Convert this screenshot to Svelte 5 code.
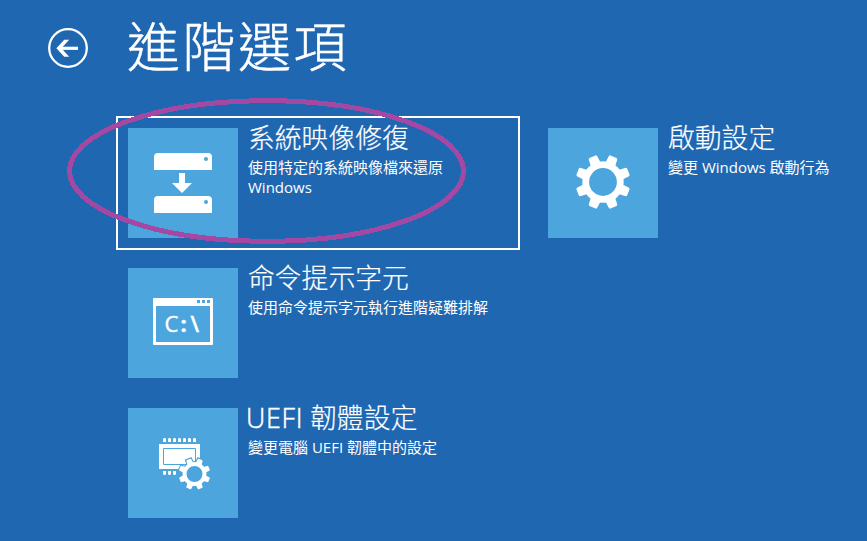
<script>
  const options = [
    { icon: 'image', title: '系統映像修復', text: '使用特定的系統映像檔來還原 Windows', selected: true },
    { icon: 'gear', title: '啟動設定', text: '變更 Windows 啟動行為' },
    { icon: 'prompt', title: '命令提示字元', text: '使用命令提示字元執行進階疑難排解' },
    { icon: 'blank' },
    { icon: 'firmware', prefix: 'UEFI', title: '韌體設定', text: '變更電腦 UEFI 韌體中的設定' }
  ];
  const teeth = [22.5, 67.5, 112.5, 157.5, 202.5, 247.5, 292.5, 337.5];
</script>

{#snippet gear()}
  <circle r="17.3" fill="none" stroke="#fff" stroke-width="6.8" />
  {#each teeth as angle}
    <path d="M-5.2-19L-4.6-25.8Q-4.4-27.4-3.2-27.4H3.2Q4.4-27.4 4.6-25.8L5.2-19Z" fill="#fff" transform="rotate({angle})" />
  {/each}
{/snippet}

<main>
  <header>
    <svg class="back" width="42" height="42" viewBox="0 0 42 42" fill="none" stroke="#fff">
      <circle cx="21" cy="21" r="18.8" stroke-width="2.3" />
      <path d="M31 21.3H13" stroke-width="3.2" />
      <path d="M17.2 12.8H22.2L14.4 21.3L22.2 29.8H17.2L9.4 21.3Z" fill="#fff" stroke="none" />
    </svg>
    <h1>進階選項</h1>
  </header>

  <div class="grid">
    {#each options as o}
      {#if o.title}
        <button class="option" class:selected={o.selected}>
          <span class="tile">
            <svg width="110" height="110" viewBox="0 0 110 110">
              {#if o.icon === 'image'}
                <g fill="#fff">
                  <path d="M26 42V29Q26 25 30 25H80Q84 25 84 29V42Z" />
                  <path d="M26 85V72Q26 68 30 68H80Q84 68 84 72V85Z" />
                  <path d="M51 45H57V55H64L54 65L44 55H51Z" />
                </g>
                <circle cx="78" cy="31" r="2" fill="#4ca6dd" />
                <circle cx="78" cy="74" r="2" fill="#4ca6dd" />
              {:else if o.icon === 'gear'}
                <g transform="translate(55 54)">{@render gear()}</g>
              {:else if o.icon === 'prompt'}
                <path d="M26 30H84Q85 30 85 31V76Q85 77 84 77H26Q25 77 25 76V31Q25 30 26 30ZM28 38V74H82V38Z" fill="#fff" fill-rule="evenodd" />
                <path d="M69 32h3v3h-3zM74 32h3v3h-3zM79 32h3v3h-3z" fill="#4ca6dd" />
                <text y="63.6"><tspan x="36.6">C</tspan><tspan x="52.6" font-weight="700">:</tspan><tspan x="62.4" font-weight="600">\</tspan></text>
              {:else}
                <path d="M31 36H72V61H31Z" fill="#fff" />
                <path d="M35.5 40.5H67.5V56.5H35.5Z" fill="none" stroke="#4ca6dd" />
                {#each [0, 1, 2, 3, 4, 5, 6] as i}
                  <path d="M{35 + i * 5} 34V31L{35.8 + i * 5} 30H{37.2 + i * 5}L{38 + i * 5} 31V34Z" fill="#fff" />
                {/each}
                {#each [0, 1, 2] as i}
                  <path d="M{35 + i * 5} 63H{38 + i * 5}V66L{37.2 + i * 5} 67H{35.8 + i * 5}L{35 + i * 5} 66Z" fill="#fff" />
                {/each}
                <g transform="translate(66.5 66) scale(.575)">
                  <circle r="20" fill="none" stroke="#4ca6dd" stroke-width="5" />
                  <g stroke="#4ca6dd" stroke-width="3.6">
                    {#each teeth as angle}
                      <path d="M-5.2-19L-4.6-27.4H4.6L5.2-19Z" transform="rotate({angle})" />
                    {/each}
                  </g>
                  <circle r="17" fill="#4ca6dd" />
                  {@render gear()}
                </g>
              {/if}
            </svg>
          </span>
          <span class="copy">
            <span class="name">{#if o.prefix}<span class="latin">{o.prefix}</span>{' '}{/if}{o.title}</span>
            <span class="desc">{o.text}</span>
          </span>
        </button>
      {:else}
        <span></span>
      {/if}
    {/each}
  </div>

  <svg class="marker" width="404" height="150" viewBox="0 0 404 150">
    <ellipse cx="201.5" cy="75" rx="197" ry="70.3" fill="none" stroke="#a349a4" stroke-width="5" shape-rendering="crispEdges" />
  </svg>
</main>

<style>
  main {
    position: relative;
    box-sizing: border-box;
    width: 867px;
    height: 541px;
    overflow: hidden;
    background: #2067b2;
    color: #fff;
    font-family: 'Open Sans', 'Noto Sans CJK TC', sans-serif;
  }
  header {
    display: flex;
    align-items: flex-start;
    height: 116px;
    padding-left: 47px;
    box-sizing: border-box;
  }
  .back {
    margin-top: 27px;
  }
  h1 {
    margin: 4px 0 0 38px;
    font: 300 53px/80px 'Noto Sans CJK TC', sans-serif;
    letter-spacing: 2.5px;
    -webkit-text-stroke: 0.5px #fff;
    white-space: nowrap;
  }
  .grid {
    display: grid;
    grid-template-columns: 404px 404px;
    grid-auto-rows: 134px;
    gap: 6px 16px;
    padding-left: 116px;
  }
  .option {
    display: flex;
    align-items: flex-start;
    gap: 10px;
    padding: 10px;
    border: 2px solid transparent;
    background: none;
    color: inherit;
    font: inherit;
    text-align: left;
  }
  .selected {
    border-color: #fff;
  }
  .tile {
    flex: none;
    width: 110px;
    height: 110px;
    background: #4ca6dd;
  }
  .tile svg {
    display: block;
  }
  .tile text {
    font: 500 22px 'Open Sans', sans-serif;
    fill: #fff;
    stroke: #fff;
    stroke-width: 0.4px;
  }
  .copy {
    display: flex;
    flex-direction: column;
    width: 245px;
    margin-top: -8px;
  }
  .name {
    font-size: 26.8px;
    font-weight: 300;
    line-height: 36px;
    white-space: nowrap;
    -webkit-text-stroke: 0.2px #fff;
  }
  .latin {
    margin-left: -2px;
    letter-spacing: 0.7px;
    -webkit-text-stroke: 0.5px #fff;
  }
  .desc {
    width: 245px;
    margin-top: 1px;
    font-size: 15px;
    line-height: 20px;
  }
  .marker {
    position: absolute;
    left: 65px;
    top: 96px;
    pointer-events: none;
  }
</style>
